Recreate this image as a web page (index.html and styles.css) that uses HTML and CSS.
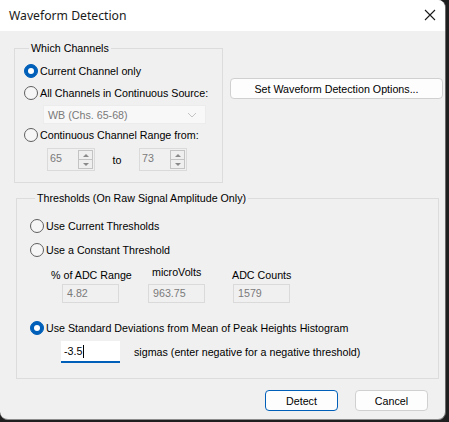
FILE: index.html
```html
<!DOCTYPE html>
<html>
<head>
<meta charset="utf-8">
<link rel="stylesheet" href="styles.css">
</head>
<body>
<div class="dialog">
  <div class="titlebar">
    <span class="title">Waveform Detection</span>
    <svg class="close" width="12" height="12" viewBox="0 0 12 12"><path d="M1 1 L11 11 M11 1 L1 11" stroke="#1a1a1a" stroke-width="1.1" fill="none"/></svg>
  </div>
  <div class="content">
    <div class="top-row">
      <fieldset class="group channels">
        <legend>Which Channels</legend>
        <div class="row"><span class="radio on"></span><span>Current Channel only</span></div>
        <div class="row"><span class="radio"></span><span>All Channels in Continuous Source:</span></div>
        <div class="combo"><span>WB (Chs. 65-68)</span><svg class="chev" width="10" height="6" viewBox="0 0 10 6"><path d="M1 1 L5 5 L9 1" stroke="#c4c4c4" stroke-width="1" fill="none"/></svg></div>
        <div class="row"><span class="radio"></span><span>Continuous Channel Range from:</span></div>
        <div class="range-row">
          <div class="spin"><span class="spin-val">65</span><span class="spin-btns"><span class="sb up"></span><span class="sb down"></span></span></div>
          <span class="to">to</span>
          <div class="spin"><span class="spin-val">73</span><span class="spin-btns"><span class="sb up"></span><span class="sb down"></span></span></div>
        </div>
      </fieldset>
      <button class="btn options">Set Waveform Detection Options...</button>
    </div>
    <fieldset class="group thresholds">
      <legend>Thresholds (On Raw Signal Amplitude Only)</legend>
      <div class="row r2"><span class="radio"></span><span>Use Current Thresholds</span></div>
      <div class="row r2"><span class="radio"></span><span>Use a Constant Threshold</span></div>
      <div class="adc-grid">
        <span class="lab l1">% of ADC Range</span>
        <span class="lab l2">microVolts</span>
        <span class="lab l3">ADC Counts</span>
        <span class="dis i1">4.82</span>
        <span class="dis i2">963.75</span>
        <span class="dis i3">1579</span>
      </div>
      <div class="row r2 r3"><span class="radio on"></span><span>Use Standard Deviations from Mean of Peak Heights Histogram</span></div>
      <div class="sigma-row">
        <span class="edit">-3.5<span class="caret"></span></span>
        <span class="sigma-text">sigmas (enter negative for a negative threshold)</span>
      </div>
    </fieldset>
    <div class="buttons">
      <button class="btn dlg default">Detect</button>
      <button class="btn dlg">Cancel</button>
    </div>
  </div>
</div>
</body>
</html>
```
FILE: styles.css
```css
html, body {
  margin: 0;
  padding: 0;
}
body {
  width: 449px;
  height: 422px;
  background: #1f1f1f;
  overflow: hidden;
  font-family: "Liberation Sans", Arial, sans-serif;
  font-size: 10.7px;
  color: #000;
}
.dialog {
  width: 446px;
  height: 420px;
  background: #f0f0f0;
  border-radius: 0 8px 8px 8px;
  overflow: hidden;
  box-sizing: border-box;
  border-bottom: 1px solid #8c8c8c;
  border-right: 1px solid #6a6a6a;
}
.titlebar {
  height: 31px;
  background: #fff;
  display: flex;
  align-items: center;
  padding-left: 9px;
}
.title {
  font-family: "Noto Sans", "Open Sans", sans-serif;
  font-size: 12.2px;
  color: #1a1a1a;
  flex: 1;
  margin-top: -1px;
}
.close {
  margin-right: 9px;
  margin-top: -1px;
}
.content {
  padding: 11px 0 0 14px;
}
.top-row {
  display: flex;
  align-items: flex-start;
}
.group {
  margin: 0;
  padding: 0;
  border: 1px solid #dcdcdc;
  min-width: 0;
  box-sizing: border-box;
}
.group legend {
  padding: 0 2px;
  margin-left: 5px;
  line-height: 13px;
  height: 13px;
}
.channels {
  width: 209px;
  padding: 5px 0 11px 9px;
}
.row {
  display: flex;
  align-items: center;
  height: 22px;
  gap: 2px;
  white-space: nowrap;
}
.radio {
  width: 14px;
  height: 14px;
  box-sizing: border-box;
  border-radius: 50%;
  border: 1px solid #5f5f5f;
  background: #f6f6f6;
  flex: none;
  display: flex;
  align-items: center;
  justify-content: center;
}
.radio.on {
  background: #005fb8;
  border-color: #005fb8;
}
.radio.on::after {
  content: "";
  width: 6px;
  height: 6px;
  border-radius: 50%;
  background: #fff;
}
.combo {
  margin: 1px 0 0 19px;
  width: 163px;
  height: 19px;
  box-sizing: border-box;
  background: #f8f8f8;
  border: 1px solid #ececec;
  display: flex;
  align-items: center;
  padding: 0 8px 0 4px;
  color: #7a7a7a;
}
.combo span {
  flex: 1;
}
.range-row {
  display: flex;
  align-items: center;
  margin: 2px 0 0 23px;
  height: 23px;
}
.spin {
  width: 48px;
  height: 23px;
  box-sizing: border-box;
  border: 1px solid #dadada;
  background: #f0f0f0;
  display: flex;
  color: #7a7a7a;
}
.spin-val {
  flex: 1;
  padding: 3px 0 0 2px;
}
.spin-btns {
  width: 16px;
  display: flex;
  flex-direction: column;
  padding: 1px 1px 1px 0;
  box-sizing: border-box;
}
.sb {
  flex: 1;
  border: 1px solid #c3c3c3;
  background: #efefef;
  display: flex;
  align-items: center;
  justify-content: center;
}
.sb.up { border-bottom-width: 0; }
.sb::after {
  content: "";
  border-left: 3px solid transparent;
  border-right: 3px solid transparent;
}
.sb.up::after { border-bottom: 3px solid #8a8a8a; }
.sb.down::after { border-top: 3px solid #8a8a8a; }
.to {
  width: 44px;
  text-align: center;
  padding-top: 1px;
}
.btn {
  font-family: "Liberation Sans", Arial, sans-serif;
  font-size: 10.7px;
  color: #000;
  background: #fdfdfd;
  border: 1px solid #d0d0d0;
  border-radius: 4px;
  padding: 0;
  box-sizing: border-box;
}
.options {
  margin: 36px 0 0 7px;
  width: 213px;
  height: 21px;
}
.thresholds {
  width: 423px;
  margin: 9px 0 0 2px;
  padding: 9px 0 15px 13px;
}
.r2 {
  height: 24px;
  gap: 2px;
}
.r3 {
  margin-top: 13px;
}
.adc-grid {
  display: grid;
  grid-template-columns: 97px 84px auto;
  grid-template-rows: 18px 19px;
  row-gap: 2px;
  margin: 2px 0 0 21px;
  align-items: end;
}
.lab { white-space: nowrap; line-height: 13px; }
.l2 { margin-left: 4px; margin-bottom: 3px; }
.dis {
  width: 57px;
  height: 19px;
  box-sizing: border-box;
  border: 1px solid #dadada;
  background: #f0f0f0;
  color: #7a7a7a;
  padding: 2px 0 0 4px;
}
.i1 { margin-left: 11px; }
.i3 { margin-left: 1px; }
.sigma-row {
  display: flex;
  align-items: center;
  margin: 1px 0 0 31px;
  height: 22px;
}
.edit {
  width: 59px;
  height: 22px;
  box-sizing: border-box;
  background: #fff;
  border-bottom: 2px solid #005fb8;
  padding: 4px 0 0 3px;
  display: flex;
  align-items: flex-start;
}
.caret {
  width: 1px;
  height: 13px;
  background: #000;
  margin-left: 1px;
}
.sigma-text {
  margin-left: 14px;
  white-space: nowrap;
}
.buttons {
  display: flex;
  justify-content: flex-end;
  gap: 17px;
  margin: 11px 17px 0 0;
}
.dlg {
  width: 73px;
  height: 21px;
}
.dlg.default {
  border-color: #005fb8;
}
```
